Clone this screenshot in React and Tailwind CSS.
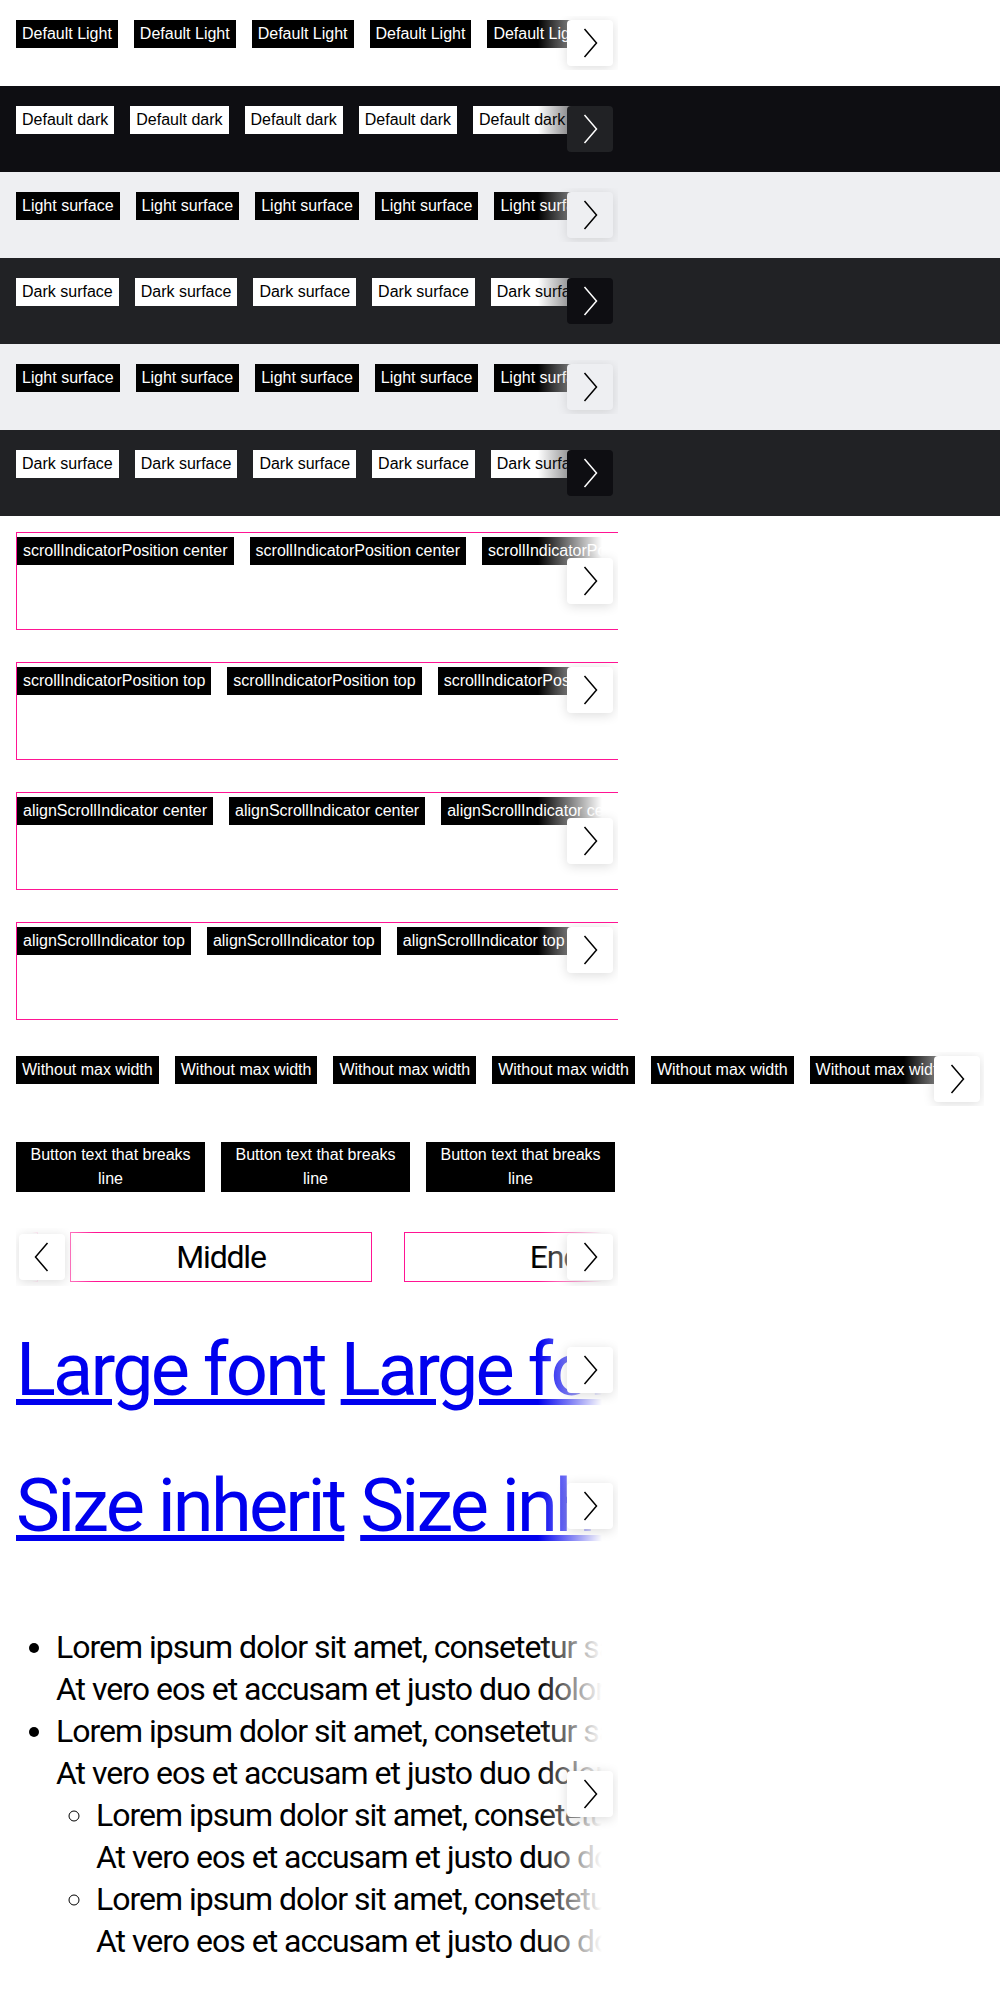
import React from 'react'

// farbwerte der vier hintergründe
const THEMES = {
  light: {
    bg: 'bg-white',
    tag: 'bg-black text-white',
    fadeR: 'bg-[linear-gradient(to_right,rgba(255,255,255,0)_0%,#ffffff_80%)]',
    fadeL: 'bg-[linear-gradient(to_left,rgba(255,255,255,0)_0%,#ffffff_80%)]',
    btn: 'bg-white text-black shadow-[0_2px_12px_rgba(0,0,0,0.14)]',
  },
  dark: {
    bg: 'bg-[#0e0e12]',
    tag: 'bg-white text-black',
    fadeR: 'bg-[linear-gradient(to_right,rgba(14,14,18,0)_0%,#0e0e12_80%)]',
    fadeL: 'bg-[linear-gradient(to_left,rgba(14,14,18,0)_0%,#0e0e12_80%)]',
    btn: 'bg-[#212225] text-white',
  },
  lightSurface: {
    bg: 'bg-[#eeeff2]',
    tag: 'bg-black text-white',
    fadeR: 'bg-[linear-gradient(to_right,rgba(238,239,242,0)_0%,#eeeff2_80%)]',
    fadeL: 'bg-[linear-gradient(to_left,rgba(238,239,242,0)_0%,#eeeff2_80%)]',
    btn: 'bg-[#eeeff2] text-black shadow-[0_2px_12px_rgba(0,0,0,0.12)]',
  },
  darkSurface: {
    bg: 'bg-[#212225]',
    tag: 'bg-white text-black',
    fadeR: 'bg-[linear-gradient(to_right,rgba(33,34,37,0)_0%,#212225_80%)]',
    fadeL: 'bg-[linear-gradient(to_left,rgba(33,34,37,0)_0%,#212225_80%)]',
    btn: 'bg-[#0e0e12] text-white',
  },
}

// schmale schrift ersatz: Roboto mit engerem abstand
const NARROW = "font-['Roboto','Liberation_Sans',sans-serif]"

function Arrow({ dir = 'right', className = '' }) {
  return (
    <span className={`flex h-[46px] w-[46px] items-center justify-center rounded ${className}`}>
      <svg width="46" height="46" viewBox="0 0 46 46" fill="none" stroke="currentColor" strokeWidth="1.5">
        <path d={dir === 'right' ? 'M17.5 9L29.5 23L17.5 37' : 'M28.5 9L16.5 23L28.5 37'} />
      </svg>
    </span>
  )
}

function Scroller({
  theme = 'light',
  width = 'w-[602px]',
  box = '',
  track = 'gap-4 items-start min-h-[54px]',
  top = false,
  left = false,
  right = true,
  rightPos = 'right-[5px]',
  children,
}) {
  const t = THEMES[theme]
  const vert = top ? 'top-1' : 'top-1/2 -translate-y-1/2'
  return (
    <div className={`relative overflow-hidden ${width} ${box}`}>
      <div className={`flex py-1 whitespace-nowrap ${track}`}>{children}</div>
      {left && (
        <>
          <div className={`absolute top-0 bottom-0 left-0 w-[80px] ${t.fadeL}`} />
          <Arrow dir="left" className={`absolute left-[3px] ${vert} ${t.btn}`} />
        </>
      )}
      {right && (
        <>
          <div className={`absolute top-0 bottom-0 right-0 w-[80px] ${t.fadeR}`} />
          <Arrow className={`absolute ${rightPos} ${vert} ${t.btn}`} />
        </>
      )}
    </div>
  )
}

function Tags({ label, cls, n = 8 }) {
  return Array.from({ length: n }).map((_, i) => (
    <span key={i} className={`shrink-0 px-1.5 py-px text-[16px] leading-[26px] ${cls}`}>
      {label}
    </span>
  ))
}

const LINE1 = 'Lorem ipsum dolor sit amet, consetetur sadipscing elitr, sed diam nonumy eirmod tempor invidunt ut labore et dolore magna aliquyam erat, sed diam voluptua.'
const LINE2 = 'At vero eos et accusam et justo duo dolores et ea rebum. Stet clita kasd gubergren, no sea takimata sanctus est Lorem ipsum dolor sit amet.'

export default function App() {
  const surfaceRows = [
    ['light', 'Default Light'],
    ['dark', 'Default dark'],
    ['lightSurface', 'Light surface'],
    ['darkSurface', 'Dark surface'],
    ['lightSurface', 'Light surface'],
    ['darkSurface', 'Dark surface'],
  ]

  const pinkRows = [
    ['scrollIndicatorPosition center', false],
    ['scrollIndicatorPosition top', true],
    ['alignScrollIndicator center', false],
    ['alignScrollIndicator top', true],
  ]

  return (
    <div className="bg-white font-['Liberation_Sans',Arial,sans-serif] text-black">
      {surfaceRows.map(([theme, label], i) => (
        <div key={i} className={`p-4 ${THEMES[theme].bg}`}>
          <Scroller theme={theme}>
            <Tags label={label} cls={THEMES[theme].tag} />
          </Scroller>
        </div>
      ))}

      {pinkRows.map(([label, top], i) => (
        <div key={i} className="p-4">
          <Scroller box="h-[98px] border-l border-t border-b border-[#ff1493]" top={top}>
            <Tags label={label} cls="bg-black text-white" n={4} />
          </Scroller>
        </div>
      ))}

      {/* ohne max-width */}
      <div className="p-4">
        <Scroller width="w-full" rightPos="right-[4px]">
          <Tags label="Without max width" cls="bg-black text-white" n={8} />
        </Scroller>
      </div>

      {/* umbrechender text */}
      <div className="p-4">
        <Scroller right={false}>
          {[0, 1, 2].map((i) => (
            <span key={i} className="w-[189px] shrink-0 whitespace-normal bg-black px-1.5 py-px text-center text-[16px] leading-6 text-white">
              Button text that breaks line
            </span>
          ))}
        </Scroller>
      </div>

      {/* start / middle / end */}
      <div className="p-4">
        <Scroller left track="gap-8 items-start -translate-x-[280px]">
          {['Start', 'Middle', 'End'].map((s) => (
            <div key={s} className={`flex h-[50px] w-[302px] shrink-0 items-center justify-center border border-[#ff1493] text-[32px] leading-[48px] tracking-[-1.2px] ${NARROW}`}>
              {s}
            </div>
          ))}
        </Scroller>
      </div>

      {/* grosse schrift */}
      <div className="p-4">
        <Scroller track="gap-4 items-start">
          {[0, 1, 2, 3].map((i) => (
            <a key={i} href="#" className={`shrink-0 text-[74px] leading-[96px] tracking-[-2.8px] text-[#0000ee] underline decoration-[6px] underline-offset-[4px] ${NARROW}`}>
              Large font
            </a>
          ))}
        </Scroller>
      </div>

      <div className="p-4">
        <Scroller track="gap-4 items-start">
          {[0, 1, 2, 3].map((i) => (
            <a key={i} href="#" className={`shrink-0 text-[74px] leading-[96px] tracking-[-2.8px] text-[#0000ee] underline decoration-[6px] underline-offset-[4px] ${NARROW}`}>
              Size inherit
            </a>
          ))}
        </Scroller>
      </div>

      {/* liste */}
      <div className="p-4">
        <Scroller track="items-start">
          <ul className={`my-8 list-disc pl-10 text-[32px] leading-[42px] tracking-[-1px] ${NARROW}`}>
            <li>
              {LINE1}
              <br />
              {LINE2}
            </li>
            <li>
              {LINE1}
              <br />
              {LINE2}
              <ul className="list-[circle] pl-10">
                <li>
                  {LINE1}
                  <br />
                  {LINE2}
                </li>
                <li>
                  {LINE1}
                  <br />
                  {LINE2}
                </li>
              </ul>
            </li>
          </ul>
        </Scroller>
      </div>
    </div>
  )
}
